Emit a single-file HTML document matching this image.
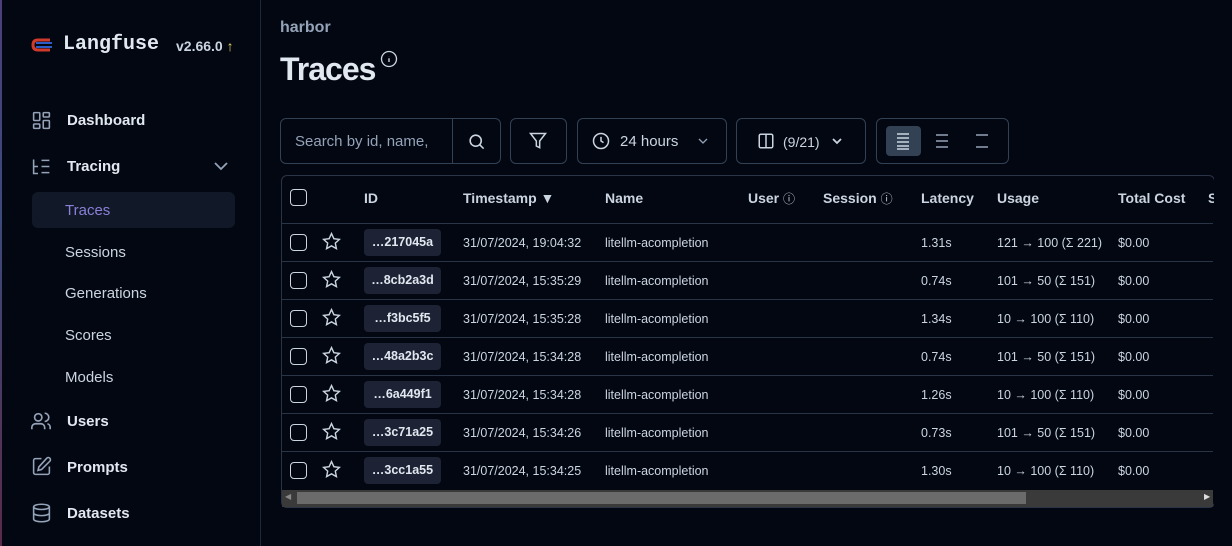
<!DOCTYPE html>
<html><head><meta charset="utf-8"><style>
*{box-sizing:border-box;margin:0;padding:0}
body{width:1232px;height:546px;overflow:hidden;background:#030712;color:#e2e8f0;font-family:"Liberation Sans",sans-serif;position:relative}
.abs{position:absolute;white-space:nowrap}
.side{position:absolute;left:0;top:0;width:261px;height:546px;border-right:1px solid #1e293b}
.edge{position:absolute;left:0;top:0;width:2px;height:546px;background:linear-gradient(#4c3f7a,#3b4a7a 40%,#5a2a4a)}
.nav{font-weight:bold;font-size:15px;color:#e2e8f0}
.sub{font-size:15px;color:#cbd5e1}
.box{position:absolute;border:1px solid #334155;border-radius:6px}
.th{position:absolute;top:190px;font-size:14px;font-weight:bold;color:#cbd5e1;white-space:nowrap}
.td{position:absolute;font-size:12.5px;color:#cbd5e1;white-space:nowrap}
.cb{position:absolute;width:17px;height:17px;border:1.5px solid #cbd5e1;border-radius:4px}
.id{position:absolute;left:364px;width:77px;height:27px;background:#1e2235;border-radius:4px;font-size:12.5px;font-weight:bold;color:#e2e8f0;text-align:center;line-height:27px}
.hl{position:absolute;left:282px;width:931px;height:1px;background:#2a3447}
svg{position:absolute}
</style></head><body>
<div class="side"></div><div class="edge"></div>
<svg style="left:30px;top:36px" width="24" height="18" viewBox="0 0 24 18"><path d="M20 4H8Q3 4 3 9T8 14H20" stroke="#d03a2a" stroke-width="3" fill="none"/><path d="M6 7H22M6 11H22" stroke="#2c5cc5" stroke-width="2"/></svg>
<div class="abs" style="left:63px;top:33px;font-family:'Liberation Mono',monospace;font-weight:bold;font-size:20px;color:#e2e8f0">Langfuse</div>
<div class="abs" style="left:176px;top:38px;font-size:14px;font-weight:bold;color:#cbd5e1">v2.66.0 <span style="color:#e8d36a;font-weight:normal">↑</span></div>
<svg style="left:31px;top:110px" width="21" height="21" viewBox="0 0 24 24" fill="none" stroke="#94a3b8" stroke-width="1.8"><rect x="3" y="3" width="7" height="9" rx="1"/><rect x="14" y="3" width="7" height="5" rx="1"/><rect x="14" y="12" width="7" height="9" rx="1"/><rect x="3" y="16" width="7" height="5" rx="1"/></svg>
<div class="abs nav" style="left:67px;top:112px">Dashboard</div>
<svg style="left:31px;top:156px" width="21" height="21" viewBox="0 0 24 24" fill="none" stroke="#94a3b8" stroke-width="1.8"><path d="M3 4V20H8M3 12H8M12 5H21M12 12H21M12 19H21"/></svg>
<div class="abs nav" style="left:67px;top:158px">Tracing</div>
<svg style="left:212px;top:158px" width="18" height="16" viewBox="0 0 18 16" fill="none" stroke="#94a3b8" stroke-width="1.8"><path d="M3 5L9 11L15 5"/></svg>
<div style="position:absolute;left:32px;top:192px;width:203px;height:36px;background:#111827;border-radius:6px"></div>
<div class="abs sub" style="left:65px;top:202px;color:#8b7fd8">Traces</div>
<div class="abs sub" style="left:65px;top:244px">Sessions</div>
<div class="abs sub" style="left:65px;top:285px">Generations</div>
<div class="abs sub" style="left:65px;top:327px">Scores</div>
<div class="abs sub" style="left:65px;top:369px">Models</div>
<svg style="left:30px;top:410px" width="22" height="22" viewBox="0 0 24 24" fill="none" stroke="#94a3b8" stroke-width="1.8"><circle cx="9" cy="8" r="4"/><path d="M2 21V19A4 4 0 0 1 6 15H12A4 4 0 0 1 16 19V21M16 3.5A4 4 0 0 1 16 12.5M22 21V19A4 4 0 0 0 19 15"/></svg>
<div class="abs nav" style="left:67px;top:413px">Users</div>
<svg style="left:31px;top:456px" width="21" height="21" viewBox="0 0 24 24" fill="none" stroke="#94a3b8" stroke-width="1.8"><path d="M12 3H5A2 2 0 0 0 3 5V19A2 2 0 0 0 5 21H19A2 2 0 0 0 21 19V12"/><path d="M18 2.5A2.1 2.1 0 0 1 21.5 6L12 15.5L8 16.5L9 12.5Z"/></svg>
<div class="abs nav" style="left:67px;top:459px">Prompts</div>
<svg style="left:31px;top:502px" width="21" height="22" viewBox="0 0 24 24" fill="none" stroke="#94a3b8" stroke-width="1.8"><ellipse cx="12" cy="5" rx="9" ry="3"/><path d="M3 5V19C3 20.7 7 22 12 22S21 20.7 21 19V5M3 12C3 13.7 7 15 12 15S21 13.7 21 12"/></svg>
<div class="abs nav" style="left:67px;top:505px">Datasets</div>

<div class="abs" style="left:280px;top:19px;font-size:16px;font-weight:bold;color:#94a3b8">harbor</div>
<div class="abs" style="left:280px;top:51px;font-size:32px;font-weight:bold;color:#e2e8f0;letter-spacing:-1px">Traces</div>
<svg style="left:380px;top:50px" width="18" height="18" viewBox="0 0 24 24" fill="none" stroke="#cbd5e1" stroke-width="1.8"><circle cx="12" cy="12" r="10"/><path d="M12 16V11M12 8V8.1"/></svg>

<div class="box" style="left:280px;top:118px;width:221px;height:46px"></div>
<div style="position:absolute;left:452px;top:119px;width:1px;height:44px;background:#334155"></div>
<div class="abs" style="left:295px;top:133px;font-size:15px;color:#94a3b8">Search by id, name,</div>
<svg style="left:467px;top:132px" width="19" height="19" viewBox="0 0 24 24" fill="none" stroke="#cbd5e1" stroke-width="2"><circle cx="11" cy="11" r="7"/><path d="M16 16L21 21"/></svg>
<div class="box" style="left:510px;top:118px;width:57px;height:46px"></div>
<svg style="left:528px;top:131px" width="20" height="20" viewBox="0 0 24 24" fill="none" stroke="#cbd5e1" stroke-width="1.8"><path d="M3 3H21L14 12V20L10 18V12Z"/></svg>
<div class="box" style="left:577px;top:118px;width:150px;height:46px"></div>
<svg style="left:591px;top:131px" width="20" height="20" viewBox="0 0 24 24" fill="none" stroke="#cbd5e1" stroke-width="1.8"><circle cx="12" cy="12" r="9"/><path d="M12 7V12L15 14"/></svg>
<div class="abs" style="left:620px;top:133px;font-size:15px;color:#cbd5e1">24 hours</div>
<svg style="left:696px;top:134px" width="14" height="14" viewBox="0 0 14 14" fill="none" stroke="#94a3b8" stroke-width="1.3"><path d="M3 5L7 9L11 5"/></svg>
<div class="box" style="left:736px;top:118px;width:130px;height:46px"></div>
<svg style="left:757px;top:132px" width="18" height="18" viewBox="0 0 24 24" fill="none" stroke="#cbd5e1" stroke-width="2"><rect x="3" y="3" width="18" height="18" rx="2"/><path d="M12 3V21"/></svg>
<div class="abs" style="left:783px;top:134px;font-size:14px;color:#cbd5e1">(9/21)</div>
<svg style="left:830px;top:134px" width="14" height="14" viewBox="0 0 14 14" fill="none" stroke="#cbd5e1" stroke-width="1.8"><path d="M3 5L7 9L11 5"/></svg>
<div class="box" style="left:876px;top:118px;width:133px;height:46px"></div>
<div style="position:absolute;left:886px;top:126px;width:35px;height:30px;background:#334155;border-radius:4px"></div>
<svg style="left:896px;top:132px" width="14" height="18" viewBox="0 0 14 18" stroke="#cbd5e1" stroke-width="1.5"><path d="M1 2H13M1 6H13M1 10H13M1 14H13M1 17H13"/></svg>
<svg style="left:935px;top:133px" width="14" height="16" viewBox="0 0 14 16" stroke="#94a3b8" stroke-width="1.5"><path d="M1 2H13M1 8H13M1 14H13"/></svg>
<svg style="left:975px;top:133px" width="14" height="16" viewBox="0 0 14 16" stroke="#94a3b8" stroke-width="1.5"><path d="M1 2H13M1 14H13"/></svg>

<div class="box" style="left:281px;top:175px;width:934px;height:333px;border-color:#2a3447"></div>
<div class="cb" style="left:290px;top:189px"></div>
<div class="th" style="left:364px">ID</div>
<div class="th" style="left:463px">Timestamp ▼</div>
<div class="th" style="left:605px">Name</div>
<div class="th" style="left:748px">User <span style="font-weight:normal;font-size:12px">ⓘ</span></div>
<div class="th" style="left:823px">Session <span style="font-weight:normal;font-size:12px">ⓘ</span></div>
<div class="th" style="left:921px">Latency</div>
<div class="th" style="left:997px">Usage</div>
<div class="th" style="left:1118px">Total Cost</div>
<div class="th" style="left:1208px">S</div>
<div style="position:absolute;left:1214px;top:176px;width:18px;height:330px;background:#030712"></div>
<div class="hl" style="top:223px"></div>
<div id="rows"></div>
<div style="position:absolute;left:282px;top:490px;width:931px;height:17px;background:#3a3a3a"></div>
<div style="position:absolute;left:297px;top:492px;width:729px;height:12px;background:#6b6b6b"></div>
<div class="abs" style="left:285px;top:492px;font-size:8px;color:#888">◀</div>
<div class="abs" style="left:1204px;top:492px;font-size:8px;color:#ddd">▶</div>
<script>
var d=[["…217045a","31/07/2024, 19:04:32","1.31s","121 → 100 (Σ 221)"],["…8cb2a3d","31/07/2024, 15:35:29","0.74s","101 → 50 (Σ 151)"],["…f3bc5f5","31/07/2024, 15:35:28","1.34s","10 → 100 (Σ 110)"],["…48a2b3c","31/07/2024, 15:34:28","0.74s","101 → 50 (Σ 151)"],["…6a449f1","31/07/2024, 15:34:28","1.26s","10 → 100 (Σ 110)"],["…3c71a25","31/07/2024, 15:34:26","0.73s","101 → 50 (Σ 151)"],["…3cc1a55","31/07/2024, 15:34:25","1.30s","10 → 100 (Σ 110)"]];
var h="";d.forEach(function(r,i){var c=242+i*38;
h+='<div class="cb" style="left:290px;top:'+(c-8)+'px"></div>';
h+='<svg style="left:322px;top:'+(c-10)+'px" width="19" height="19" viewBox="0 0 24 24" fill="none" stroke="#cbd5e1" stroke-width="1.8"><path d="M12 2L15 8.5L22 9.3L16.8 14L18.2 21L12 17.5L5.8 21L7.2 14L2 9.3L9 8.5Z"/></svg>';
h+='<div class="id" style="top:'+(c-13)+'px">'+r[0]+'</div>';
h+='<div class="td" style="left:463px;top:'+(c-6)+'px">'+r[1]+'</div>';
h+='<div class="td" style="left:605px;top:'+(c-6)+'px">litellm-acompletion</div>';
h+='<div class="td" style="left:921px;top:'+(c-6)+'px">'+r[2]+'</div>';
h+='<div class="td" style="left:997px;top:'+(c-6)+'px">'+r[3]+'</div>';
h+='<div class="td" style="left:1118px;top:'+(c-6)+'px">$0.00</div>';
if(i<6)h+='<div class="hl" style="top:'+(c+19)+'px"></div>';});
document.getElementById("rows").innerHTML=h;
</script>
</body></html>
